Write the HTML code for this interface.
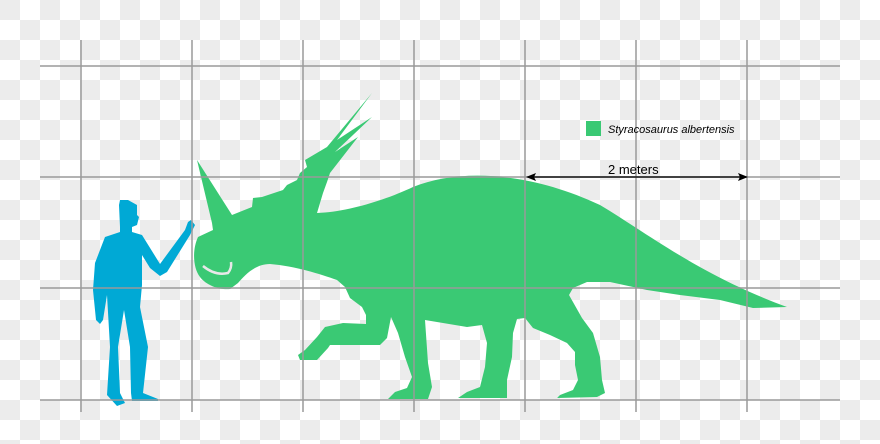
<!DOCTYPE html>
<html><head><meta charset="utf-8"><style>
html,body{margin:0;padding:0}
body{width:880px;height:444px;overflow:hidden;
background-color:#fff;
background-image:linear-gradient(45deg,#ececec 25%,transparent 25%,transparent 75%,#ececec 75%),linear-gradient(45deg,#ececec 25%,transparent 25%,transparent 75%,#ececec 75%);
background-size:40px 40px;background-position:20px 0,0 20px;}
svg{position:absolute;left:0;top:0}
</style></head><body>
<svg width="880" height="444" viewBox="0 0 880 444">
<g fill="#00a9d5">
<path d="M120,200 L128,200 L137,205 L137,215 L139,217 L137,225 L132,227 L132,232 L142,235 L160,264 L185,230 L188,222 L191,220 L195,225 L190,235 L167,272 L160,276 L150,268 L142,255 L142,285 L140,307 L148,347 L143,393 L158,399 L158,401 L132,401 L131,393 L130,347 L124,310 L118,347 L120,393 L125,403 L117,406 L107,395 L110,347 L107,295 L103,320 L100,324 L96,320 L93,290 L95,263 L105,237 L120,232 L120,227 L119,205 Z"/>
</g>
<g fill="#3ac974">
<path d="M787,307 L753,308 L720,300 L680,295 L647,290 L610,282 L587,282 L573,288 L569,295 L582,318 L593,333 L600,357 L602,380 L605,393 L597,397 L557,398 L560,395 L573,390 L578,380 L575,365 L575,352 L567,343 L550,335 L533,328 L525,318 L517,319 L513,333 L512,357 L507,380 L507,398 L458,398 L467,392 L480,387 L485,367 L487,343 L482,325 L467,327 L425,320 L428,363 L432,387 L428,399 L388,399 L395,392 L407,388 L412,377 L405,357 L398,333 L391,317 L387,338 L380,345 L330,345 L328,348 L317,360 L300,360 L298,355 L305,350 L317,337 L325,327 L343,323 L366,324 L366,315 L362,307 L350,298 L345,287 L337,280 C320,274 295,266 270,264 C255,264 245,275 238,283 L230,289 C220,290 207,286 200,277 C193,268 192,250 198,237 L213,230 L212,223 L197,160 L232,215 L252,207 L253,198 L262,197 L283,190 L287,185 L297,180 L300,173 L307,167 L305,160 L327,147 L372,93 L337,140 L372,117 L335,152 L358,137 L330,173 L327,182 L323,193 L320,203 L317,213 C350,212 390,198 413,187 C460,168 530,172 600,205 C650,235 700,275 787,307 Z"/>
</g>
<path d="M203,266 Q215,276 228,273 Q232,268 231,262" fill="none" stroke="#e8e8e8" stroke-width="2.5"/>
<g stroke="#999" stroke-opacity="0.75" stroke-width="2" fill="none">
<path d="M40,66H840M40,177H840M40,288H840M40,400H840"/>
<path d="M81,40V412M192,40V412M303,40V412M414,40V412M525,40V412M636,40V412M747,40V412"/>
</g>
<rect x="586" y="121" width="15" height="15" fill="#3ac974"/>
<text x="608" y="133" font-family="Liberation Sans, sans-serif" font-style="italic" font-size="11" fill="#000">Styracosaurus albertensis</text>
<text x="608" y="174" font-family="Liberation Sans, sans-serif" font-size="13" fill="#000">2 meters</text>
<path d="M534,177H740" stroke="#000" stroke-width="1.2"/>
<path d="M526,177L536,173L534,177L536,181Z M748,177L738,173L740,177L738,181Z" fill="#000"/>
</svg>
</body></html>
